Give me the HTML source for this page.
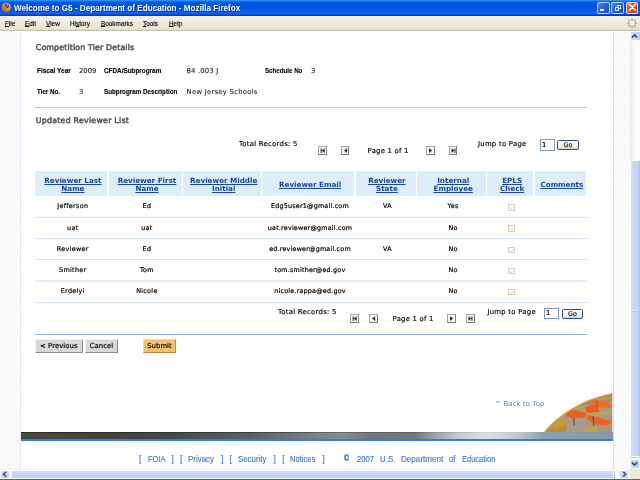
<!DOCTYPE html>
<html lang="en">
<head>
<meta charset="utf-8">
<title>Welcome to G5 - Department of Education - Mozilla Firefox</title>
<style>
html,body{margin:0;padding:0;}
body{width:640px;height:480px;overflow:hidden;position:relative;background:#fff;
  font-family:"DejaVu Sans","Liberation Sans",sans-serif;font-size:6.875px;color:#000;}
.abs,.t,.l,.v,.h,.c{position:absolute;white-space:pre;line-height:1;}
/* ---------- window chrome ---------- */
#titlebar{position:absolute;left:0;top:0;width:640px;height:15.7px;
  background:linear-gradient(#3a94f8 0,#2c86f7 0.8px,#0a6cf8 1.5px,#0059e4 2.6px,#0053e0 5px,#0053e0 8px,#0059ee 10px,#0066f6 12px,#0066f6 13.8px,#0044d8 14.7px,#002fc4 15.7px);}
#titletext{position:absolute;left:13.9px;top:3.5px;color:#fff;font:bold 9px "Liberation Sans",sans-serif;line-height:1;
  white-space:pre;text-shadow:0.7px 0.7px 0 #0a2a8a;transform-origin:0 0;transform:scaleX(0.904);}
.wbtn{position:absolute;top:1.5px;width:12.6px;height:12.9px;border:0.6px solid rgba(255,255,255,0.72);border-radius:2px;box-sizing:border-box;
  background:linear-gradient(135deg,#5a8af0 0,#2d63e2 40%,#1a4ccb 100%);}
#wclose{background:linear-gradient(135deg,#ee8563 0,#e2512d 45%,#c93d18 100%);}
#menubar{position:absolute;left:0;top:15.7px;width:640px;height:15.2px;background:linear-gradient(#f4f3ec 0,#f2f1e8 3px,#eeecdf 6px,#eae8d8 10px,#e8e6d3 13.2px,#d6d1bf 14px,#bfb8a8 14.7px,#c4beae 15.2px);}
.m{position:absolute;top:19.6px;font:7.3px "Liberation Sans",sans-serif;white-space:pre;color:#000;line-height:1;-webkit-text-stroke:0.14px #000;transform-origin:0 0;transform:scaleX(0.875);}
.m u{text-decoration:underline;text-decoration-thickness:0.6px;text-underline-offset:0.35px;}
/* ---------- page ---------- */
#page{position:absolute;left:0;top:31px;width:630px;height:438.4px;background:#fff;overflow:hidden;}
#root{position:absolute;left:0;top:0;width:640px;height:480px;overflow:hidden;will-change:transform;}
.hatch{position:absolute;top:0;height:439px;
  background:repeating-linear-gradient(135deg,#ffffff 0,#ffffff 0.9px,#f4f6f9 0.9px,#f4f6f9 1.77px);}
#hl{left:0;width:20px;border-right:1.2px solid #e0e8f8;}
#hr{left:612.8px;width:16.8px;border-left:1.1px solid #cddef3;box-sizing:border-box;}
.t{font:7.8px "DejaVu Sans",sans-serif;color:#5a5a5a;-webkit-text-stroke:0.55px #5a5a5a;letter-spacing:0.17px;}
.l{font:bold 6.875px "Liberation Sans",sans-serif;color:#000;-webkit-text-stroke:0.12px #000;transform-origin:0 0;transform:scaleX(0.91);}
.v{font:6.875px "DejaVu Sans",sans-serif;color:#000;-webkit-text-stroke:0.16px #000;}
.lt{color:#161616;-webkit-text-stroke:0.08px #161616;}
.rule{position:absolute;left:35px;width:552px;height:1px;background:#d3e2f2;}
.hc{position:absolute;top:139.9px;height:25px;background:#deeef8;}
.h{font:bold 7.2px "DejaVu Sans",sans-serif;color:#16469f;text-align:center;line-height:8px;
  text-decoration:underline;text-decoration-thickness:0.6px;text-underline-offset:0.6px;}
.c{font:6.4px "DejaVu Sans",sans-serif;color:#000;text-align:center;letter-spacing:0.31px;-webkit-text-stroke:0.2px #000;margin-top:0.4px;}
.nb{position:absolute;width:8.8px;height:8.8px;box-sizing:border-box;background:#f3f3f1;
  border:0.8px solid;border-color:#a4a4a4 #7c7c7c #7c7c7c #a4a4a4;box-shadow:inset 0 0 0 0.7px #fdfdfd;}
.nb svg{position:absolute;left:0;top:0;width:7.2px;height:7.2px;}
.inp{position:absolute;box-sizing:border-box;background:#fff;border:0.8px solid #7f9db9;}
.go{position:absolute;box-sizing:border-box;border:0.75px solid #274f82;border-radius:1.8px;
  background:linear-gradient(#ffffff,#f2f1ea 70%,#d9d5c6);font:6.4px "DejaVu Sans",sans-serif;text-align:center;line-height:9.8px;color:#000;-webkit-text-stroke:0.12px #000;}
.cb{position:absolute;width:6.6px;height:6.8px;box-sizing:border-box;border:0.6px solid #d2d0c6;background:#fdfdfb;}
.cb svg{position:absolute;left:0.1px;top:0.1px;width:5.2px;height:5.4px;}
.btn{position:absolute;top:308px;height:13.5px;box-sizing:border-box;background:#d9d9d9;
  border:0.8px solid;border-color:#f1f1f1 #8e8e8e #8e8e8e #f1f1f1;font:6.875px "DejaVu Sans",sans-serif;text-align:center;line-height:13.2px;color:#000;-webkit-text-stroke:0.18px #000;letter-spacing:0.06px;}
#submit{background:#f6bf6c;border-color:#fbdca8 #c08a34 #c08a34 #fbdca8;}
.f{position:absolute;top:423.8px;font:8.4px "Liberation Sans",sans-serif;color:#3977c6;-webkit-text-stroke:0.12px #3977c6;white-space:pre;line-height:1;transform-origin:0 0;}
/* ---------- scrollbars ---------- */
#vs{position:absolute;left:629.6px;top:31px;width:10.4px;height:438.4px;background:linear-gradient(90deg,#ebe9df 0,#f3f2ec 18%,#fbfbf9 50%,#fefefd);}
#hs{position:absolute;left:0;top:469.4px;width:640px;height:9.2px;background:linear-gradient(#f1f0ea,#fbfbf9 40%,#fefefd);}
.sb{position:absolute;box-sizing:border-box;border:0.6px solid #fff;border-radius:1.6px;background:linear-gradient(90deg,#d0defd,#bccdfa);}
#bottomline{position:absolute;left:0;top:478.5px;width:640px;height:1.5px;background:#2c6bdc;}
</style>
</head>
<body>
<div id="root">

<!-- ===== title bar ===== -->
<div id="titlebar">
  <svg class="abs" style="left:1.1px;top:2px;width:10.5px;height:10.2px" viewBox="0 0 22 22">
    <defs><linearGradient id="fxg" x1="1" y1="0.2" x2="0" y2="0.9"><stop offset="0" stop-color="#fbbf24"/><stop offset="0.45" stop-color="#f08a1c"/><stop offset="1" stop-color="#d9480c"/></linearGradient></defs>
    <circle cx="11" cy="11.4" r="10" fill="url(#fxg)"/>
    <path d="M2.4 6.5 L3.6 2.2 L6.8 4.6 Z M7 3.6 L10 0.6 L11.6 4 Z" fill="#ef7d1b"/>
    <circle cx="12" cy="9" r="4.9" fill="#243f9a"/>
    <circle cx="13" cy="7.2" r="2" fill="#86a9ea"/>
    <path d="M3.4 9.4 C7 6.6 10 8.4 11.6 12.6 C8.6 13.6 5.2 12.6 3.4 9.4Z" fill="#f0861d"/>
    <path d="M11.6 12.6 C13.4 14.2 16 13.6 17 11.4 C17.4 14.4 15 16.4 12 15.8 Z" fill="#f6a21e"/>
  </svg>
  <div id="titletext">Welcome to G5 - Department of Education - Mozilla Firefox</div>
  <div class="wbtn" id="wmin" style="left:597.3px"><div class="abs" style="left:2.2px;top:6.9px;width:4px;height:1.5px;background:#fff"></div></div>
  <div class="wbtn" id="wmax" style="left:611.3px">
    <div class="abs" style="left:4.4px;top:2.2px;width:4.8px;height:4px;border:0.65px solid rgba(255,255,255,0.9);border-top-width:1.1px;box-sizing:border-box"></div>
    <div class="abs" style="left:2.4px;top:4.2px;width:4.8px;height:4.2px;border:0.65px solid rgba(255,255,255,0.9);border-top-width:1.1px;box-sizing:border-box;background:#2a5fe0"></div>
  </div>
  <div class="wbtn" id="wclose" style="left:625.6px">
    <svg class="abs" style="left:0.3px;top:-0.2px;width:10.8px;height:10.8px" viewBox="0 0 12 12"><path d="M2.6 2.6 L9.4 9.4 M9.4 2.6 L2.6 9.4" stroke="#fff" stroke-width="1.5" stroke-linecap="round"/></svg>
  </div>
</div>

<!-- ===== menu bar ===== -->
<div id="menubar"></div>
<div class="m" style="left:5px"><u>F</u>ile</div>
<div class="m" style="left:25px"><u>E</u>dit</div>
<div class="m" style="left:46px"><u>V</u>iew</div>
<div class="m" style="left:70px">Hi<u>s</u>tory</div>
<div class="m" style="left:100.5px"><u>B</u>ookmarks</div>
<div class="m" style="left:143px"><u>T</u>ools</div>
<div class="m" style="left:168.7px"><u>H</u>elp</div>
<svg class="abs" style="left:626.6px;top:17.6px;width:10.4px;height:10.4px" viewBox="0 0 22 22">
  <g fill="#a9a69a">
    <circle cx="11" cy="3" r="2.3"/><circle cx="16.7" cy="5.3" r="2.3"/><circle cx="19" cy="11" r="2.3"/><circle cx="16.7" cy="16.7" r="2.3"/>
    <circle cx="11" cy="19" r="2.3"/><circle cx="5.3" cy="16.7" r="2.3"/><circle cx="3" cy="11" r="2.3"/><circle cx="5.3" cy="5.3" r="2.3"/>
  </g>
</svg>

<!-- ===== page content (coordinates relative to y=31) ===== -->
<div id="page">
  <div class="hatch" id="hl"></div>
  <div class="hatch" id="hr"></div>

  <div class="t" style="left:35.8px;top:12.1px">Competition Tier Details</div>

  <div class="l" style="left:36.6px;top:35.8px;transform:scaleX(0.945)">Fiscal Year</div>
  <div class="v lt" style="left:79px;top:35.7px">2009</div>
  <div class="l" style="left:104px;top:35.8px;transform:scaleX(0.928)">CFDA/Subprogram</div>
  <div class="v lt" style="left:186.6px;top:35.7px;letter-spacing:0.16px">84 .003 J</div>
  <div class="l" style="left:264.6px;top:35.8px;transform:scaleX(0.9)">Schedule No</div>
  <div class="v lt" style="left:311px;top:35.7px">3</div>

  <div class="l" style="left:37px;top:57.4px;transform:scaleX(0.905)">Tier No.</div>
  <div class="v lt" style="left:79px;top:57.3px">3</div>
  <div class="l" style="left:104px;top:57.4px;transform:scaleX(0.912)">Subprogram Description</div>
  <div class="v lt" style="left:186.6px;top:57.3px;letter-spacing:0.25px">New Jersey Schools</div>

  <div class="rule" style="top:76px;background:#aecdec"></div>
  <div class="t" style="left:35.8px;top:85.1px;letter-spacing:0.27px">Updated Reviewer List</div>

  <!-- top pager -->
  <div class="v" style="left:239px;top:108.9px;letter-spacing:0.27px">Total Records: 5</div>
  <div class="nb" style="left:318px;top:115.1px"><svg viewBox="0 0 8 8"><path d="M1.9 1.3h1.1v5.4H1.9zM6.3 1.3v5.4L3 4z" fill="#2b2b2b"/></svg></div>
  <div class="nb" style="left:340.6px;top:115.1px"><svg viewBox="0 0 8 8"><path d="M5.7 1.3v5.4L2.3 4z" fill="#2b2b2b"/></svg></div>
  <div class="v" style="left:367.6px;top:115.9px;letter-spacing:0.22px">Page 1 of 1</div>
  <div class="nb" style="left:426.2px;top:115.1px"><svg viewBox="0 0 8 8"><path d="M2.3 1.3v5.4L5.7 4z" fill="#2b2b2b"/></svg></div>
  <div class="nb" style="left:448.6px;top:115.1px"><svg viewBox="0 0 8 8"><path d="M5 1.3h1.1v5.4H5zM1.7 1.3v5.4L5 4z" fill="#2b2b2b"/></svg></div>
  <div class="v" style="left:478px;top:108.9px;letter-spacing:0.27px">Jump to Page</div>
  <div class="inp" style="left:540px;top:108.4px;width:14.6px;height:11.2px"><div class="v" style="left:1px;top:0.2px;font-size:6.8px;letter-spacing:0">1</div></div>
  <div class="go" style="left:557.4px;top:109.4px;width:21.2px;height:9.4px">Go</div>

  <!-- table header -->
  <div class="hc" style="left:35px;width:72.2px"></div>
  <div class="hc" style="left:108.8px;width:72.8px"></div>
  <div class="hc" style="left:183.2px;width:77.4px"></div>
  <div class="hc" style="left:262.4px;width:91.8px"></div>
  <div class="hc" style="left:355.8px;width:59.8px"></div>
  <div class="hc" style="left:417.2px;width:68.4px"></div>
  <div class="hc" style="left:487.2px;width:46.2px"></div>
  <div class="hc" style="left:535px;width:51.4px"></div>

  <div class="h" style="left:36.8px;width:72.2px;top:146.2px">Reviewer Last
Name</div>
  <div class="h" style="left:110.6px;width:72.8px;top:146.2px">Reviewer First
Name</div>
  <div class="h" style="left:185.0px;width:77.4px;top:146.2px">Reviewer Middle
Initial</div>
  <div class="h" style="left:264.2px;width:91.8px;top:150.2px">Reviewer Email</div>
  <div class="h" style="left:357px;width:59.8px;top:146.2px">Reviewer
State</div>
  <div class="h" style="left:419.0px;width:68.4px;top:146.2px">Internal
Employee</div>
  <div class="h" style="left:489.0px;width:46.2px;top:146.2px">EPLS
Check</div>
  <div class="h" style="left:536.2px;width:51.4px;top:150.2px">Comments</div>

  <!-- rows: baselines 208,229.4,250.6,271.6,292.6 (abs) ; lines 217,238.4,259.4,281,302 -->
  <div class="rule" style="top:185.6px"></div>
  <div class="rule" style="top:207px"></div>
  <div class="rule" style="top:228.2px"></div>
  <div class="rule" style="top:249px;background:#dcebf6"></div>
  <div class="rule" style="top:250px;background:#ececf6"></div>
  <div class="rule" style="top:270.8px"></div>

  <div class="c" style="left:36.7px;width:72.2px;top:170.9px">Jefferson</div>
  <div class="c" style="left:110.5px;width:72.8px;top:170.9px">Ed</div>
  <div class="c" style="left:264.1px;width:91.8px;top:170.9px;letter-spacing:0.20px">Edg5user1@gmail.com</div>
  <div class="c" style="left:357.5px;width:59.8px;top:170.9px">VA</div>
  <div class="c" style="left:418.9px;width:68.4px;top:170.9px">Yes</div>
  <div class="cb" style="left:508.4px;top:173px"><svg viewBox="0 0 10 10"><path d="M1.8 4.6l2.4 2.8L8.4 2.4" stroke="#cbc9bf" stroke-width="1.5" fill="none"/></svg></div>

  <div class="c" style="left:36.7px;width:72.2px;top:192.3px">uat</div>
  <div class="c" style="left:110.5px;width:72.8px;top:192.3px">uat</div>
  <div class="c" style="left:264.1px;width:91.8px;top:192.3px;letter-spacing:0.20px">uat.reviewer@gmail.com</div>
  <div class="c" style="left:418.9px;width:68.4px;top:192.3px">No</div>
  <div class="cb" style="left:508.4px;top:194.4px"><svg viewBox="0 0 10 10"><path d="M1.8 4.6l2.4 2.8L8.4 2.4" stroke="#cbc9bf" stroke-width="1.5" fill="none"/></svg></div>

  <div class="c" style="left:36.7px;width:72.2px;top:213.5px">Reviewer</div>
  <div class="c" style="left:110.5px;width:72.8px;top:213.5px">Ed</div>
  <div class="c" style="left:264.1px;width:91.8px;top:213.5px;letter-spacing:0.20px">ed.reviewer@gmail.com</div>
  <div class="c" style="left:357.5px;width:59.8px;top:213.5px">VA</div>
  <div class="c" style="left:418.9px;width:68.4px;top:213.5px">No</div>
  <div class="cb" style="left:508.4px;top:215.6px"><svg viewBox="0 0 10 10"><path d="M1.8 4.6l2.4 2.8L8.4 2.4" stroke="#cbc9bf" stroke-width="1.5" fill="none"/></svg></div>

  <div class="c" style="left:36.7px;width:72.2px;top:234.5px">Smither</div>
  <div class="c" style="left:110.5px;width:72.8px;top:234.5px">Tom</div>
  <div class="c" style="left:264.1px;width:91.8px;top:234.5px;letter-spacing:0.20px">tom.smither@ed.gov</div>
  <div class="c" style="left:418.9px;width:68.4px;top:234.5px">No</div>
  <div class="cb" style="left:508.4px;top:236.6px"><svg viewBox="0 0 10 10"><path d="M1.8 4.6l2.4 2.8L8.4 2.4" stroke="#cbc9bf" stroke-width="1.5" fill="none"/></svg></div>

  <div class="c" style="left:36.7px;width:72.2px;top:255.5px">Erdelyi</div>
  <div class="c" style="left:110.5px;width:72.8px;top:255.5px">Nicole</div>
  <div class="c" style="left:264.1px;width:91.8px;top:255.5px;letter-spacing:0.20px">nicole.rappa@ed.gov</div>
  <div class="c" style="left:418.9px;width:68.4px;top:255.5px">No</div>
  <div class="cb" style="left:508.4px;top:257.6px"><svg viewBox="0 0 10 10"><path d="M1.8 4.6l2.4 2.8L8.4 2.4" stroke="#cbc9bf" stroke-width="1.5" fill="none"/></svg></div>

  <!-- bottom pager -->
  <div class="v" style="left:278px;top:276.9px;letter-spacing:0.27px">Total Records: 5</div>
  <div class="nb" style="left:350.4px;top:283.4px"><svg viewBox="0 0 8 8"><path d="M1.9 1.3h1.1v5.4H1.9zM6.3 1.3v5.4L3 4z" fill="#2b2b2b"/></svg></div>
  <div class="nb" style="left:369.4px;top:283.4px"><svg viewBox="0 0 8 8"><path d="M5.7 1.3v5.4L2.3 4z" fill="#2b2b2b"/></svg></div>
  <div class="v" style="left:392.6px;top:283.5px;letter-spacing:0.22px">Page 1 of 1</div>
  <div class="nb" style="left:447.4px;top:283.4px"><svg viewBox="0 0 8 8"><path d="M2.3 1.3v5.4L5.7 4z" fill="#2b2b2b"/></svg></div>
  <div class="nb" style="left:466.4px;top:283.4px"><svg viewBox="0 0 8 8"><path d="M5 1.3h1.1v5.4H5zM1.7 1.3v5.4L5 4z" fill="#2b2b2b"/></svg></div>
  <div class="v" style="left:487.4px;top:276.9px;letter-spacing:0.27px">Jump to Page</div>
  <div class="inp" style="left:544px;top:277px;width:15px;height:11.4px"><div class="v" style="left:1px;top:0.2px;font-size:6.8px;letter-spacing:0">1</div></div>
  <div class="go" style="left:562px;top:277.6px;width:21px;height:10px">Go</div>

  <div class="rule" style="top:303px;background:#92bae6;height:1px"></div>

  <div class="btn" style="left:35px;width:47.6px">&lt; Previous</div>
  <div class="btn" style="left:85px;width:33px">Cancel</div>
  <div class="btn" id="submit" style="left:142.6px;width:33.8px">Submit</div>

  <div class="v" style="left:495.3px;top:368.9px;color:#4d8ed2;-webkit-text-stroke:0.05px #4d8ed2;letter-spacing:0.14px">^ Back to Top</div>

  <!-- decorative classroom photo (arc) -->
  <svg class="abs" style="left:536px;top:357px;width:80px;height:56px" viewBox="0 0 640 448">
    <defs><clipPath id="arc"><path d="M65 356 C170 225 370 90 612 45 L612 356 Z"/></clipPath></defs>
    <g clip-path="url(#arc)">
      <rect x="0" y="0" width="640" height="448" fill="#ab9a80"/>
      <path d="M60 360 L240 230 L250 350 Z" fill="#b98d3c"/>
      <path d="M130 292 L236 238 L242 282 L140 332 Z" fill="#cf9a34"/>
      <path d="M245 240 L400 245 L405 340 L250 350 Z" fill="#a99c8c"/>
      <path d="M400 240 L612 200 L612 356 L400 356 Z" fill="#a6977f"/>
      <path d="M300 110 L612 40 L612 110 L440 140 L300 160 Z" fill="#9c8a6a"/>
      <path d="M440 90 L530 95 L612 135 L604 162 L500 152 L446 122 Z" fill="#f06a20"/>
      <path d="M460 80 L612 68 L612 90 L482 101 Z" fill="#b49a5c"/>
      <path d="M290 150 L420 130 L442 152 L330 172 Z" fill="#b8a05e"/>
      <path d="M235 186 L300 175 L400 196 L396 236 L290 242 L246 226 Z" fill="#f0601c"/>
      <path d="M395 152 L490 130 L512 196 L412 204 Z" fill="#ee5a1a"/>
      <path d="M410 200 L612 184 L612 214 L440 227 Z" fill="#b9a363"/>
      <path d="M410 216 L452 226 L612 266 L562 302 L470 288 L412 252 Z" fill="#f25f1c"/>
      <path d="M380 342 L440 310 L492 320 L492 356 L400 356 Z" fill="#c8a040"/>
      <path d="M296 240 L306 240 L312 300 L302 300 Z" fill="#5a564c"/>
      <path d="M452 226 L462 226 L466 300 L456 300 Z" fill="#5a564c"/>
      <path d="M482 100 L490 100 L492 132 L484 132 Z" fill="#5a564c"/>
    </g>
    <path d="M65 356 C170 225 370 90 612 45" fill="none" stroke="#dfa032" stroke-width="9"/>
  </svg>

  <!-- metal bar -->
  <div class="abs" style="left:21px;top:401px;width:591.6px;height:7.2px;background:linear-gradient(90deg,#4a4a40 0.0%,#43443c 13.3%,#454848 25.2%,#5a6164 38.7%,#7a868b 50.5%,#828e93 54.7%,#6d777b 59.0%,#707b80 66.6%,#99a4a9 69.9%,#c5cdd1 74.2%,#d8dee1 78.4%,#cdd4d9 81.8%,#b2bdc5 85.1%,#8f9eab 88.5%,#8797a5 100.0%);"></div>
  <div class="abs" style="left:21px;top:401px;width:591.6px;height:1px;background:linear-gradient(90deg,rgba(0,0,0,0.38) 0,rgba(0,0,0,0.34) 45%,rgba(0,0,0,0.22) 62%,rgba(0,0,0,0.06) 76%,rgba(0,0,0,0) 84%);"></div>
  <div class="abs" style="left:21px;top:408.2px;width:591.6px;height:2px;background:#2f7fde"></div>

  <!-- footer -->
  <div class="f" style="left:139px">[</div>
  <div class="f" style="left:147.6px;transform:scaleX(0.889)">FOIA</div>
  <div class="f" style="left:171.6px">]</div>
  <div class="f" style="left:180px">[</div>
  <div class="f" style="left:188px;transform:scaleX(0.946)">Privacy</div>
  <div class="f" style="left:221.2px">]</div>
  <div class="f" style="left:229.6px">[</div>
  <div class="f" style="left:237.6px;transform:scaleX(0.938)">Security</div>
  <div class="f" style="left:273.6px">]</div>
  <div class="f" style="left:282.2px">[</div>
  <div class="f" style="left:290px;transform:scaleX(0.908)">Notices</div>
  <div class="f" style="left:322.6px">]</div>
  <div class="f" style="left:344.4px;font-size:8.2px;top:424px;-webkit-text-stroke:0.3px #3977c6;transform:scaleX(0.86)">©</div>
  <div class="f" style="left:357px;transform:scaleX(0.911)">2007</div>
  <div class="f" style="left:379.6px;transform:scaleX(0.944)">U.S.</div>
  <div class="f" style="left:400.6px;transform:scaleX(0.968)">Department</div>
  <div class="f" style="left:449px;transform:scaleX(0.914)">of</div>
  <div class="f" style="left:461.6px;transform:scaleX(0.895)">Education</div>
</div>

<!-- ===== vertical scrollbar ===== -->
<div id="vs">
  <div class="sb" style="left:0.8px;top:-0.2px;width:10.2px;height:9.7px"></div>
  <svg class="abs" style="left:1.6px;top:1.6px;width:7px;height:6px" viewBox="0 0 7 6"><path d="M0.8 4.6L3.5 1.9L6.2 4.6" fill="none" stroke="#36486f" stroke-width="1.5"/></svg>
  <div class="sb" style="left:0.8px;top:129.4px;width:9.7px;height:296.6px;border-right:1px solid #b6c5de;box-shadow:0 0.8px 0 #a9bbee"></div>
  <div class="abs" style="left:3px;top:276px;width:4.4px;height:0.7px;background:#d9e3fd;box-shadow:0 0.7px 0 #a3b6ef"></div>
  <div class="abs" style="left:3px;top:277.6px;width:4.4px;height:0.7px;background:#d9e3fd;box-shadow:0 0.7px 0 #a3b6ef"></div>
  <div class="abs" style="left:3px;top:279.2px;width:4.4px;height:0.7px;background:#d9e3fd;box-shadow:0 0.7px 0 #a3b6ef"></div>
  <div class="sb" style="left:0.3px;top:427.6px;width:10.1px;height:10.8px"></div>
  <svg class="abs" style="left:1.6px;top:430px;width:7px;height:6px" viewBox="0 0 7 6"><path d="M0.8 1.4L3.5 4.1L6.2 1.4" fill="none" stroke="#36486f" stroke-width="1.5"/></svg>
</div>

<!-- ===== horizontal scrollbar ===== -->
<div id="hs">
  <div class="sb" style="left:0.4px;top:0.5px;width:10px;height:8.7px;background:linear-gradient(#d0defd,#bccdfa)"></div>
  <svg class="abs" style="left:2.4px;top:1.7px;width:5.4px;height:6.4px" viewBox="0 0 5.4 6.4"><path d="M4.2 0.8L1.6 3.2L4.2 5.6" fill="none" stroke="#36486f" stroke-width="1.4"/></svg>
  <div class="sb" style="left:10.8px;top:0.5px;width:603.4px;height:8.7px;background:linear-gradient(#d0defd,#bccdfa);box-shadow:0.8px 0.6px 0 #a9bbee"></div>
  <div class="sb" style="left:619px;top:0.5px;width:9.8px;height:8.7px;background:linear-gradient(#d0defd,#bccdfa)"></div>
  <svg class="abs" style="left:621.8px;top:1.7px;width:5.4px;height:6.4px" viewBox="0 0 5.4 6.4"><path d="M1.2 0.8L3.8 3.2L1.2 5.6" fill="none" stroke="#36486f" stroke-width="1.4"/></svg>
  <div class="abs" style="left:629.6px;top:0;width:10.4px;height:9.2px;background:#ece9d8"></div>
</div>
<div id="bottomline"></div>
</div>

</body>
</html>
